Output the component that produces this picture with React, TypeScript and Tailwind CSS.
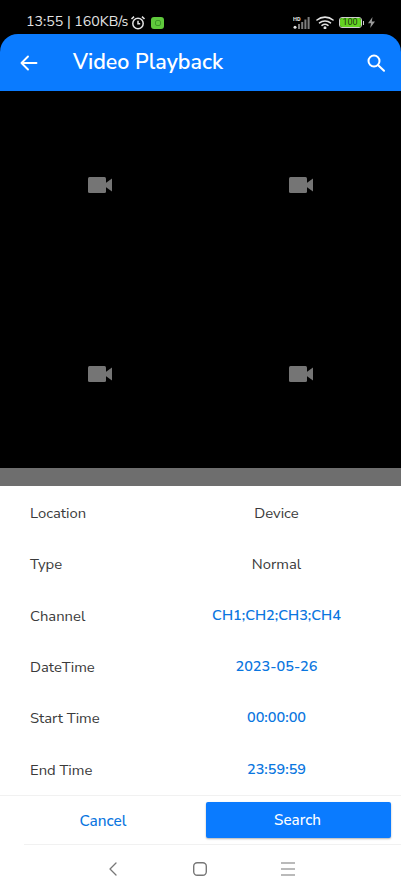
const ROWS = [
  { label: "Location", value: "Device", accent: false },
  { label: "Type", value: "Normal", accent: false },
  { label: "Channel", value: "CH1;CH2;CH3;CH4", accent: true },
  { label: "DateTime", value: "2023-05-26", accent: true },
  { label: "Start Time", value: "00:00:00", accent: true },
  { label: "End Time", value: "23:59:59", accent: true },
];

function CameraIcon() {
  return (
    <svg width="24" height="16" viewBox="0 0 24 16" fill="#757575">
      <rect x="0" y="0" width="18" height="16" rx="1.5" />
      <path d="M24 1.5V14.5L17 9.5V6.5Z" />
    </svg>
  );
}

function StatusBar() {
  return (
    <div className="h-[34px] bg-black flex items-center justify-between pl-[26px] pr-[26px] pt-[11px] text-[#e4e4e4]">
      <div className="flex items-center">
        <span className="text-[14.2px] leading-none">13:55 | 160KB/s</span>
        <svg className="ml-[2px]" width="16" height="16" viewBox="0 0 16 16" fill="none" stroke="#e4e4e4" strokeWidth="1.5">
          <circle cx="8" cy="8.5" r="5.2" />
          <path d="M8 5.8V8.8H10.2M1.5 4L4 1.6M14.5 4L12 1.6" />
        </svg>
        <span className="ml-[5px] w-[13px] h-[12px] rounded-[3px] bg-[#5fc93c] flex items-center justify-center">
          <span className="w-[6px] h-[6px] rounded-[2px] border border-[#3c9a28]" />
        </span>
      </div>
      <div className="flex items-center">
        <svg width="18" height="13" viewBox="0 0 18 13" fill="#7d7d7d">
          <text x="0" y="5" fontSize="5.5" fontWeight="700" fill="#e4e4e4" fontFamily="Roboto, sans-serif">HD</text>
          <circle cx="2" cy="11.3" r="1.5" fill="#e4e4e4" />
          <rect x="5" y="8" width="2" height="5" />
          <rect x="8.2" y="6" width="2" height="7" />
          <rect x="11.4" y="3.5" width="2" height="9.5" />
          <rect x="14.6" y="1" width="2" height="12" />
        </svg>
        <svg className="ml-[5px]" width="18" height="13" viewBox="0 0 18 13" fill="none" stroke="#e4e4e4" strokeWidth="1.6" strokeLinecap="round">
          <path d="M1 4C5.5 0.2 12.5 0.2 17 4" />
          <path d="M3.5 6.8C6.5 4.3 11.5 4.3 14.5 6.8" />
          <path d="M6 9.3C7.7 8.1 10.3 8.1 12 9.3" />
          <circle cx="9" cy="11.8" r="0.7" fill="#e4e4e4" />
        </svg>
        <div className="ml-[5px] flex items-center">
          <div className="w-[23px] h-[11px] rounded-[3px] border border-[#cfcfcf] overflow-hidden">
            <div className="h-full bg-[#63d322] flex items-center justify-center text-[9px] leading-none text-[#1d3a10] font-['Roboto',sans-serif]">100</div>
          </div>
          <span className="ml-[1px] w-[1.5px] h-[4px] bg-[#cfcfcf]" />
        </div>
        <svg className="ml-[4px]" width="7" height="11" viewBox="0 0 7 11" fill="#9a9a9a">
          <path d="M4.5 0L0 6.2H3L2.2 11L7 4.5H3.8Z" />
        </svg>
      </div>
    </div>
  );
}

export default function App() {
  return (
    <div className="w-[401px] h-[880px] overflow-hidden bg-black flex flex-col font-['Nunito_Sans','Noto_Sans',sans-serif]">
      <StatusBar />

      {/* header */}
      <div className="h-[57px] bg-[#0a7bff] rounded-t-[18px] flex items-center pl-[20px] pr-[16px] pt-[1px] text-white">
        <svg width="18" height="16" viewBox="0 0 18 16" fill="none" stroke="white" strokeWidth="1.9" strokeLinecap="round" strokeLinejoin="round">
          <path d="M1.5 8H16.5M8 1.5L1.5 8L8 14.5" />
        </svg>
        <span className="ml-[35px] text-[21.4px] font-semibold leading-none">Video Playback</span>
        <svg className="ml-auto" width="18" height="18" viewBox="0 0 18 18" fill="none" stroke="white" strokeWidth="2" strokeLinecap="round">
          <circle cx="7" cy="7" r="5.5" />
          <path d="M11.2 11.2L17 16.8" />
        </svg>
      </div>

      {/* video grid */}
      <div className="h-[377px] bg-black grid grid-cols-2 grid-rows-2">
        {[0, 1, 2, 3].map((i) => (
          <div key={i} className="flex items-center justify-center">
            <CameraIcon />
          </div>
        ))}
      </div>

      <div className="h-[18px] bg-[#6e6e6e]" />

      {/* form sheet */}
      <div className="flex-1 bg-white flex flex-col">
        <div className="h-[309px] pt-[1.5px] flex flex-col">
          {ROWS.map((r) => (
            <div key={r.label} className="h-[51.3px] shrink-0 flex items-center pl-[30px] text-[14.8px]">
              <span className="w-[123px] text-[#3a3a3a]">{r.label}</span>
              <span className={`w-[247px] text-center ${r.accent ? "text-[#0a76e0] text-[14.5px] font-semibold" : "text-[#3a3a3a]"}`}>{r.value}</span>
            </div>
          ))}
        </div>

        <div className="h-[50px] border-t border-[#f1f1f1]">
          <div className="h-full border-b border-[#f1f1f1] ml-[24px] flex items-center pr-[10px]">
            <button className="w-[158px] pt-[1px] text-[15.4px] font-medium text-[#0a76e0] text-center">Cancel</button>
            <button className="ml-[24px] w-[185px] h-[36px] pt-[1px] pr-[2px] rounded-[2px] bg-[#0a7bff] text-white text-[15.2px] font-medium shadow-[0_1px_2px_rgba(0,0,0,0.3)]">Search</button>
          </div>
        </div>

        {/* android nav */}
        <div className="flex-1 flex items-center pl-[109px] pt-[12px]">
          <svg width="8" height="14" viewBox="0 0 8 14" fill="none" stroke="#777777" strokeWidth="1.3" strokeLinecap="round" strokeLinejoin="round">
            <path d="M7 1L1 7L7 13" />
          </svg>
          <svg className="ml-[76px]" width="14" height="14" viewBox="0 0 14 14" fill="none" stroke="#777777" strokeWidth="1.4">
            <rect x="0.7" y="0.7" width="12.6" height="12.6" rx="3.5" />
          </svg>
          <svg className="ml-[74px]" width="14" height="14" viewBox="0 0 14 14" fill="none" stroke="#777777" strokeWidth="1.2">
            <path d="M0 1H14M0 7H14M0 13H14" />
          </svg>
        </div>
      </div>
    </div>
  );
}
